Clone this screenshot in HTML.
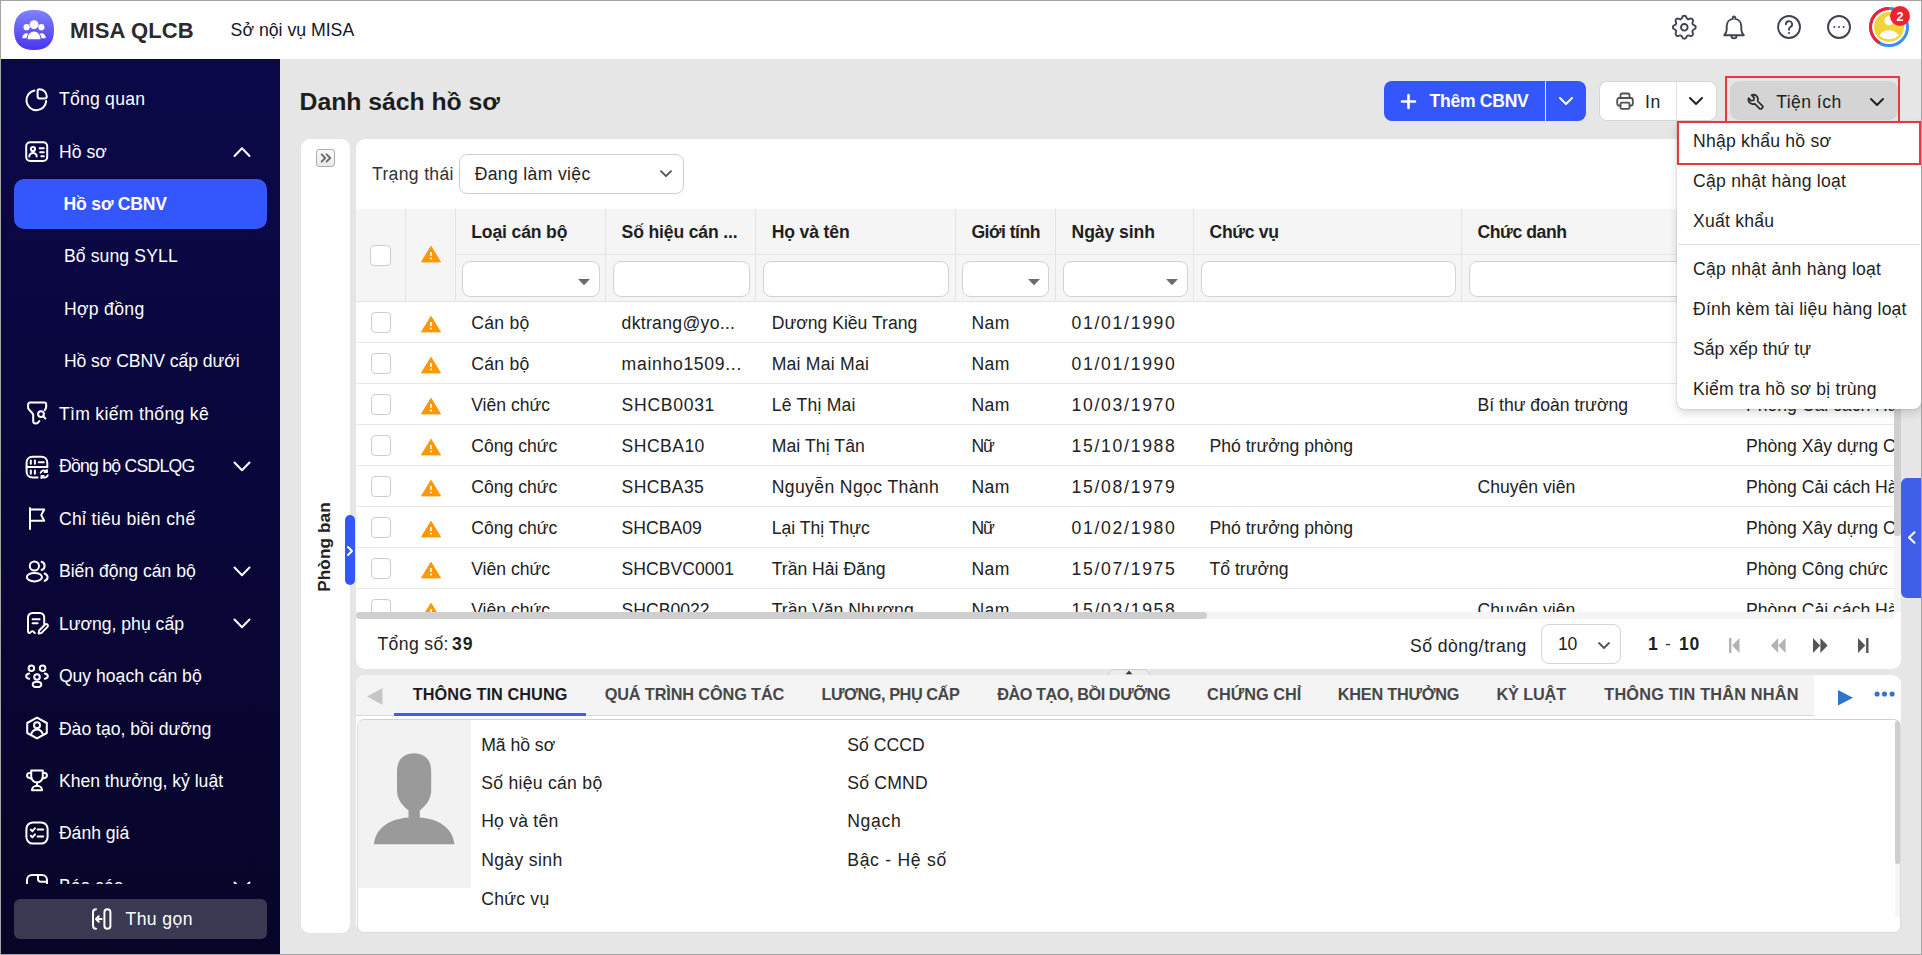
<!DOCTYPE html>
<html><head><meta charset="utf-8">
<style>
*{box-sizing:border-box;margin:0;padding:0}
html,body{width:1922px;height:955px;overflow:hidden}
body{position:relative;background:#e6e6e6;font-family:"Liberation Sans",sans-serif;color:#222}
.a{position:absolute}
.t{position:absolute;line-height:1;white-space:nowrap}
svg{position:absolute;overflow:visible}
.w{stroke:#fff;fill:none;stroke-width:2;stroke-linecap:round;stroke-linejoin:round}
.k{fill:none;stroke-linecap:round;stroke-linejoin:round}
.cb{position:absolute;background:#fff;border:1.2px solid #cdcdcd;border-radius:4px}
.fi{position:absolute;top:260.5px;height:36px;background:#fff;border:1.2px solid #d3d3d3;border-radius:8px}
.vl{position:absolute;width:1px;background:#e3e3e3}
.hl{position:absolute;height:1px;background:#e8e8e8}

</style></head><body>
<div class="a" style="left:1px;top:1px;width:1920px;height:58px;background:#fff"></div>
<svg style="left:14px;top:10px;" width="40" height="40" viewBox="0 0 40 40"><defs><linearGradient id="lg" x1="0" y1="0" x2="0" y2="1"><stop offset="0" stop-color="#7d84fd"/><stop offset="1" stop-color="#4a33f1"/></linearGradient></defs><path d="M20 0C33.5 0 40 6.5 40 20S33.5 40 20 40 0 33.5 0 20 6.5 0 20 0z" fill="url(#lg)"/></svg>
<svg style="left:14px;top:10px;" width="40" height="40" viewBox="0 0 40 40"><g fill="#fff">
<circle cx="20" cy="14.6" r="4.4"/><circle cx="12.6" cy="17.2" r="3.1"/><circle cx="27.4" cy="17.2" r="3.1"/>
<path d="M13.6 29.3c0-4.6 2.8-7.7 6.4-7.7s6.4 3.1 6.4 7.7z"/>
<path d="M8.2 28.3c0-3 1.8-5 4.5-5 .8 0 1.4.2 1.9.5-1.3 1.3-1.9 2.8-2 4.5z"/>
<path d="M31.8 28.3c0-3-1.8-5-4.5-5-.8 0-1.4.2-1.9.5 1.3 1.3 1.9 2.8 2 4.5z"/></g></svg>
<div class="t" style="left:70.0px;top:19.58px;font-size:22px;font-weight:700;color:#2b2b2b;letter-spacing:0.122px;">MISA QLCB</div>
<div class="t" style="left:230.6px;top:21.72px;font-size:17.7px;color:#15152d;letter-spacing:-0.006px;">Sở nội vụ MISA</div>
<svg style="left:1668.7px;top:11.5px" width="30.6" height="30.6" viewBox="0 0 24 24"><g class="k" stroke="#3d4350" stroke-width="1.5">
<path d="M10.325 4.317c.426-1.756 2.924-1.756 3.35 0a1.724 1.724 0 0 0 2.573 1.066c1.543-.94 3.31.826 2.37 2.37a1.724 1.724 0 0 0 1.065 2.572c1.756.426 1.756 2.924 0 3.35a1.724 1.724 0 0 0-1.066 2.573c.94 1.543-.826 3.31-2.37 2.37a1.724 1.724 0 0 0-2.572 1.065c-.426 1.756-2.924 1.756-3.35 0a1.724 1.724 0 0 0-2.573-1.066c-1.543.94-3.31-.826-2.37-2.37a1.724 1.724 0 0 0-1.065-2.572c-1.756-.426-1.756-2.924 0-3.35a1.724 1.724 0 0 0 1.066-2.573c-.94-1.543.826-3.31 2.37-2.37c1 .608 2.296.07 2.572-1.065z"/>
<circle cx="12" cy="12" r="2.6"/></g></svg>
<svg style="left:1723px;top:16px;" width="22" height="24" viewBox="0 0 22 24"><g class="k" stroke="#3d4350" stroke-width="1.9">
<path d="M1.2 19.2h19.6c-1.6-1.3-2.5-2.9-2.5-5.6V10.3c0-3.8-2.6-6.9-6-7.4V1.8a1.3 1.3 0 0 0-2.6 0v1.1c-3.4.5-6 3.6-6 7.4v3.3c0 2.7-.9 4.3-2.5 5.6z"/>
<path d="M8.4 19.8a2.6 2.6 0 0 0 5.2 0"/></g></svg>
<svg style="left:1777px;top:15px;" width="24" height="24" viewBox="0 0 24 24"><g class="k" stroke="#3d4350" stroke-width="1.9">
<circle cx="12" cy="12" r="11"/>
<path d="M8.9 9.3a3.1 3.1 0 1 1 4.6 2.7c-1 .55-1.5 1.2-1.5 2.3v.5"/></g>
<circle cx="12" cy="18" r="1.1" fill="#3d4350"/></svg>
<svg style="left:1827px;top:15px;" width="24" height="24" viewBox="0 0 24 24"><circle cx="12" cy="12" r="11" fill="none" stroke="#3d4350" stroke-width="1.9"/>
<g fill="#3d4350"><circle cx="7.4" cy="12" r="1"/><circle cx="12" cy="12" r="1"/><circle cx="16.6" cy="12" r="1"/></g></svg>
<svg style="left:1869px;top:7px;" width="40" height="40" viewBox="0 0 40 40"><circle cx="20" cy="20" r="18.5" fill="none" stroke="#3d8ef6" stroke-width="3"/>
<path d="M10.6 35.9A18.5 18.5 0 0 1 20 1.5" fill="none" stroke="#ee2530" stroke-width="3"/>
<circle cx="20" cy="20" r="15" fill="#f3d33c"/>
<circle cx="20" cy="13.8" r="4.6" fill="#fff"/>
<path d="M10.4 28.6c1.6-3.3 5.2-5.4 9.6-5.4s8 2.1 9.6 5.4c-2.2 2.5-5.6 3.6-9.6 3.6s-7.4-1.1-9.6-3.6z" fill="#fff"/></svg>
<div class="a" style="left:1890px;top:5.7px;width:20px;height:20px;border-radius:50%;background:#ec2330"></div>
<div class="t" style="left:1890.0px;top:10.73px;font-size:12.6px;font-weight:700;color:#fff;width:20px;text-align:center;">2</div>
<div class="a" style="left:1px;top:59px;width:279px;height:895px;background:linear-gradient(#0b0848 0%,#09063a 50%,#070527 100%)"></div>
<div class="a" style="left:14px;top:179px;width:253px;height:50px;border-radius:10px;background:#3456fd"></div>
<div class="t" style="left:58.9px;top:91.10px;font-size:17.6px;color:#fff;letter-spacing:0.245px;">Tổng quan</div>
<svg style="left:24.5px;top:86.6px;" width="24" height="24" viewBox="0 0 24 24"><g class="w"><path d="M9.4 3.6A9.9 9.9 0 1 0 21.2 13.9"/><path d="M12.6 4a1.8 1.8 0 0 1 1.8-1.8 7.4 7.4 0 0 1 7.4 7.4 1.8 1.8 0 0 1-1.8 1.8h-5.6a1.8 1.8 0 0 1-1.8-1.8z"/></g></svg>
<div class="t" style="left:58.9px;top:143.55px;font-size:17.6px;color:#fff;letter-spacing:0.045px;">Hồ sơ</div>
<svg style="left:24.5px;top:139.05px;" width="24" height="24" viewBox="0 0 24 24"><g class="w"><rect x="1.2" y="3.2" width="21" height="18.8" rx="4"/><circle cx="8" cy="10" r="2.1"/><path d="M4.3 17.6a3.7 3.7 0 0 1 7.4 0"/><path d="M14.6 9.3h4.2M15.2 13.3h3.6M16.3 17.3h2.5"/></g></svg>
<svg style="left:233px;top:145.65px;" width="18" height="12" viewBox="0 0 18 12"><path class="w" stroke-width="2.2" d="M1.5 10L9 2.3l7.5 7.7"/></svg>
<div class="t" style="left:63.6px;top:195.70px;font-size:17.6px;font-weight:700;color:#fff;letter-spacing:-0.208px;">Hồ sơ CBNV</div>
<div class="t" style="left:63.9px;top:248.45px;font-size:17.6px;color:#fff;letter-spacing:0.118px;">Bổ sung SYLL</div>
<div class="t" style="left:63.9px;top:300.90px;font-size:17.6px;color:#fff;letter-spacing:0.320px;">Hợp đồng</div>
<div class="t" style="left:63.9px;top:353.35px;font-size:17.6px;color:#fff;letter-spacing:-0.052px;">Hồ sơ CBNV cấp dưới</div>
<div class="t" style="left:58.9px;top:405.80px;font-size:17.6px;color:#fff;letter-spacing:0.318px;">Tìm kiếm thống kê</div>
<svg style="left:24.5px;top:401.3px;" width="24" height="24" viewBox="0 0 24 24"><g class="w"><path d="M19.8 9.2c1-1.2 1.4-2.2 1.4-3.6V3.5a2 2 0 0 0-2-2H5.1a2 2 0 0 0-2 2v2.9c0 .8.3 1.5.9 2.1l3.4 3.7c.5.5.8 1.2.8 1.9v6.1c0 1.2 1.2 2.2 2.7 2.2 1.3 0 2.6-.8 3.5-2.4"/><circle cx="16" cy="13.1" r="2.9"/><path d="M18.2 15.3l2.2 2.2"/></g></svg>
<div class="t" style="left:58.9px;top:458.25px;font-size:17.6px;color:#fff;letter-spacing:-0.717px;">Đồng bộ CSDLQG</div>
<svg style="left:24.5px;top:453.75px;" width="24" height="24" viewBox="0 0 24 24"><g class="w"><path d="M12.6 23.4H7.5c-3.5 0-5.9-2.4-5.9-5.9V8.7c0-3.5 2.4-5.9 5.9-5.9h8.9c3.5 0 5.9 2.4 5.9 5.9V13"/><path d="M1.6 13h20.7"/><path d="M5.8 6.6v3.1M9.9 6.6v3.1M13.8 8.2h5M5.8 16.6v3.1M9.9 16.6v3.1"/><g stroke-width="1.8"><path d="M15.6 18.8c.6-1.6 1.9-2.4 3.4-2.4 1.1 0 2 .5 2.6 1.2M22 15.8v2.4h-2.4"/><path d="M22.8 21.2c-.6 1.6-1.9 2.4-3.4 2.4-1.1 0-2-.5-2.6-1.2M16.4 24.2v-2.4h2.4"/></g></g></svg>
<svg style="left:233px;top:461.05px;" width="18" height="11" viewBox="0 0 18 11"><path class="w" stroke-width="2.2" d="M1.5 1.5L9 9.2l7.5-7.7"/></svg>
<div class="t" style="left:58.9px;top:510.70px;font-size:17.6px;color:#fff;letter-spacing:0.327px;">Chỉ tiêu biên chế</div>
<svg style="left:24.5px;top:506.20000000000005px;" width="24" height="24" viewBox="0 0 24 24"><g class="w"><path d="M5 23V2"/><path d="M5 3.5h14.2l-3 5.6 3 5.6H5"/></g></svg>
<div class="t" style="left:58.9px;top:563.15px;font-size:17.6px;color:#fff;">Biến động cán bộ</div>
<svg style="left:24.5px;top:558.65px;" width="24" height="24" viewBox="0 0 24 24"><g class="w"><circle cx="9.4" cy="7" r="4.6"/><ellipse cx="9.4" cy="18.2" rx="7.6" ry="4.2"/><path d="M16.6 2.8a4.3 4.3 0 0 1 0 8.2M19.6 14.5c2 .9 3 2.2 3 3.7s-1 2.8-3 3.7"/></g></svg>
<svg style="left:233px;top:565.95px;" width="18" height="11" viewBox="0 0 18 11"><path class="w" stroke-width="2.2" d="M1.5 1.5L9 9.2l7.5-7.7"/></svg>
<div class="t" style="left:58.9px;top:615.60px;font-size:17.6px;color:#fff;">Lương, phụ cấp</div>
<svg style="left:24.5px;top:611.1px;" width="24" height="24" viewBox="0 0 24 24"><g class="w"><path d="M19.2 13V6.5c0-2.5-1.9-4.5-4.4-4.5H7.4C4.9 2 3 4 3 6.5V20.6c0 1.2 1.3 1.8 2.2 1l1-1c.6-.6 1.6-.6 2.2 0l1.4 1.4"/><path d="M7.6 8.2h7M7.6 12.2h5"/><path d="M13.6 22.4l.5-2.9 6-6a1.7 1.7 0 0 1 2.4 2.4l-6 6z"/></g></svg>
<svg style="left:233px;top:618.4000000000001px;" width="18" height="11" viewBox="0 0 18 11"><path class="w" stroke-width="2.2" d="M1.5 1.5L9 9.2l7.5-7.7"/></svg>
<div class="t" style="left:58.9px;top:668.05px;font-size:17.6px;color:#fff;">Quy hoạch cán bộ</div>
<svg style="left:24.5px;top:663.5500000000001px;" width="24" height="24" viewBox="0 0 24 24"><g class="w"><circle cx="6.4" cy="4.2" r="2.8"/><circle cx="17.6" cy="4.2" r="2.8"/><circle cx="12" cy="13" r="2.8"/><ellipse cx="12" cy="20.4" rx="4.3" ry="2.6"/><path d="M4.2 9.6C2.4 10 1.2 11 1.2 12.2s1.2 2.2 3 2.6M19.8 9.6c1.8.4 3 1.4 3 2.6s-1.2 2.2-3 2.6"/></g></svg>
<div class="t" style="left:58.9px;top:720.50px;font-size:17.6px;color:#fff;">Đào tạo, bồi dưỡng</div>
<svg style="left:24.5px;top:716.0000000000001px;" width="24" height="24" viewBox="0 0 24 24"><g class="w"><path d="M12 1.6l9.8 5.4v10L12 22.4 2.2 17V7z"/><circle cx="12" cy="9.2" r="3"/><path d="M6.4 17.6c.9-2.6 3-4.2 5.6-4.2s4.7 1.6 5.6 4.2"/></g></svg>
<div class="t" style="left:58.9px;top:772.95px;font-size:17.6px;color:#fff;">Khen thưởng, kỷ luật</div>
<svg style="left:24.5px;top:768.45px;" width="24" height="24" viewBox="0 0 24 24"><g class="w"><path d="M6.2 2.4h11.6v6.2a5.8 5.8 0 0 1-11.6 0z"/><path d="M6.2 5H4.4a2.4 2.4 0 0 0-.6 4.7l2.6.9M17.8 5h1.8a2.4 2.4 0 0 1 .6 4.7l-2.6.9"/><path d="M12 14.4v3.4"/><path d="M7 22.2c0-2.4 2.2-4.4 5-4.4s5 2 5 4.4z"/></g></svg>
<div class="t" style="left:58.9px;top:825.40px;font-size:17.6px;color:#fff;">Đánh giá</div>
<svg style="left:24.5px;top:820.9000000000001px;" width="24" height="24" viewBox="0 0 24 24"><g class="w"><rect x="1.4" y="1.4" width="21.2" height="21.2" rx="6.5"/><path d="M5.8 8.6l1.6 1.6 2.6-3M12.6 8.6h5.6M5.8 14.8l1.6 1.6 2.6-3M12.6 15.4h5.6"/></g></svg>
<div class="t" style="left:58.9px;top:877.85px;font-size:17.6px;color:#fff;">Báo cáo</div>
<svg style="left:24.5px;top:873.35px;" width="24" height="24" viewBox="0 0 24 24"><g class="w"><path d="M2 22V7c0-2.8 2.2-5 5-5h10c2.8 0 5 2.2 5 5v15"/><path d="M13 2v4c0 1.6 1.3 2.8 2.8 2.8H22"/></g></svg>
<svg style="left:233px;top:880.6500000000001px;" width="18" height="11" viewBox="0 0 18 11"><path class="w" stroke-width="2.2" d="M1.5 1.5L9 9.2l7.5-7.7"/></svg>
<div class="a" style="left:1px;top:884px;width:279px;height:70px;background:linear-gradient(#07052a,#070527)"></div>
<div class="a" style="left:14px;top:899px;width:253px;height:40px;border-radius:6px;background:#3b3852"></div>
<svg style="left:91px;top:906.5px;" width="22" height="24" viewBox="0 0 22 24"><g class="w" stroke-width="2"><path d="M5 2.2c-2 0-3 1.4-3 3.2v13.2c0 1.8 1 3.2 3 3.2"/><path d="M16.4 2.2c1.8 0 3 1 3 3v13.6c0 2-1.2 3-3 3s-3-1-3-3V5.2c0-2 1.2-3 3-3z"/><path d="M10.6 12H5.4M7.8 9.2L5 12l2.8 2.8"/></g></svg>
<div class="t" style="left:125.5px;top:911.40px;font-size:17.6px;color:#fff;letter-spacing:0.406px;">Thu gọn</div>
<div class="t" style="left:299.6px;top:90.01px;font-size:24.8px;font-weight:700;color:#1d1d1d;letter-spacing:-0.050px;">Danh sách hồ sơ</div>
<div class="a" style="left:1384px;top:81px;width:202px;height:40px;border-radius:8px;background:#3456fd"></div>
<div class="a" style="left:1545px;top:81px;width:1.2px;height:40px;background:#e8ecff"></div>
<svg style="left:1401px;top:93.5px;" width="15" height="15" viewBox="0 0 15 15"><path d="M7.5 1v13M1 7.5h13" stroke="#fff" stroke-width="2.6" stroke-linecap="round"/></svg>
<div class="t" style="left:1429.6px;top:92.80px;font-size:17.6px;font-weight:700;color:#fff;letter-spacing:-0.309px;">Thêm CBNV</div>
<svg style="left:1559px;top:97px;" width="14" height="8" viewBox="0 0 14 8"><path class="w" stroke-width="2" d="M1 1l6 6 6-6"/></svg>
<div class="a" style="left:1599px;top:81px;width:117.5px;height:39.5px;border-radius:8px;background:#fff;border:1px solid #d6d6d6"></div>
<div class="a" style="left:1675.5px;top:82px;width:1px;height:38px;background:#e2e2e2"></div>
<svg style="left:1616px;top:92px;" width="18" height="18" viewBox="0 0 18 18"><g class="k" stroke="#505050" stroke-width="1.8"><path d="M4.5 6V3.2c0-1 .8-1.7 1.7-1.7h5.6c1 0 1.7.8 1.7 1.7V6"/><path d="M4.5 13.6H3.2c-1.1 0-2-.9-2-2V8c0-1.1.9-2 2-2h11.6c1.1 0 2 .9 2 2v3.6c0 1.1-.9 2-2 2h-1.3"/><rect x="4.5" y="10.6" width="9" height="6.2" rx="1.4"/></g></svg>
<div class="t" style="left:1645.0px;top:93.50px;font-size:17.6px;color:#222;letter-spacing:0.713px;">In</div>
<svg style="left:1688.5px;top:97px;" width="14" height="8" viewBox="0 0 14 8"><path class="k" stroke="#222" stroke-width="2" d="M1 1l6 6 6-6"/></svg>
<div class="a" style="left:1730px;top:81px;width:168px;height:39px;border-radius:9px;background:#d4d4d4"></div>
<svg style="left:1747px;top:92.5px;" width="17" height="17" viewBox="0 0 17 17"><path transform="translate(17 0) scale(-1 1)" class="k" stroke="#2a2a2a" stroke-width="1.7" d="M10.6 1.6a4.6 4.6 0 0 0-4.2 6.4L1.6 12.8a1.4 1.4 0 0 0 0 2l.8.8a1.4 1.4 0 0 0 2 0L9.2 10.8a4.6 4.6 0 0 0 6.2-5.6l-2.6 2.6-2.4-.6-.6-2.4 2.6-2.6c-.5-.3-1.1-.5-1.8-.5z"/></svg>
<div class="t" style="left:1776.2px;top:94.10px;font-size:17.6px;color:#222;letter-spacing:0.438px;">Tiện ích</div>
<svg style="left:1869.5px;top:98px;" width="14" height="8" viewBox="0 0 14 8"><path class="k" stroke="#222" stroke-width="2" d="M1 1l6 6 6-6"/></svg>
<div class="a" style="left:1725px;top:76px;width:175px;height:46.5px;border:2px solid #e8383e"></div>
<div class="a" style="left:301px;top:139px;width:49px;height:794px;border-radius:9px;background:#fff"></div>
<div class="a" style="left:316px;top:149px;width:19px;height:18px;border-radius:3px;background:linear-gradient(#fbfbfb,#e9e9e9);border:1px solid #acacac"></div>
<svg style="left:319.5px;top:153px;" width="12" height="10" viewBox="0 0 12 10"><path class="k" stroke="#6a6a6a" stroke-width="1.9" d="M1.6 1.4L5.2 5 1.6 8.6M6.6 1.4L10.2 5 6.6 8.6"/></svg>
<div class="t" style="left:324.6px;top:546.7px;font-size:17.2px;font-weight:700;color:#222;transform:translate(-50%,-50%) rotate(-90deg);letter-spacing:0.1px">Phòng ban</div>
<div class="a" style="left:345px;top:515px;width:10px;height:70px;border-radius:5px;background:#3456fd"></div>
<svg style="left:347px;top:546px;" width="6" height="10" viewBox="0 0 6 10"><path class="w" stroke-width="1.6" d="M1 1l4 4-4 4"/></svg>
<div class="a" style="left:356px;top:139px;width:1544.5px;height:530px;border-radius:9px;background:#fff"></div>
<div class="t" style="left:372.0px;top:166.20px;font-size:17.6px;color:#333;letter-spacing:0.326px;">Trạng thái</div>
<div class="a" style="left:459px;top:154.4px;width:224.6px;height:39.2px;border-radius:8px;background:#fff;border:1.2px solid #cfcfcf"></div>
<div class="t" style="left:474.7px;top:165.80px;font-size:17.6px;color:#1f1f1f;letter-spacing:0.335px;">Đang làm việc</div>
<svg style="left:659.5px;top:170px;" width="12" height="8" viewBox="0 0 12 8"><path class="k" stroke="#555" stroke-width="1.9" d="M1 1.2l5 5 5-5"/></svg>
<div class="a" style="left:356px;top:209.2px;width:1538.5px;height:92px;background:#f5f5f5"></div>
<div class="vl" style="left:404.9px;top:209.2px;height:92px"></div>
<div class="vl" style="left:454.7px;top:209.2px;height:92px"></div>
<div class="vl" style="left:605.1px;top:209.2px;height:92px"></div>
<div class="vl" style="left:755.2px;top:209.2px;height:92px"></div>
<div class="vl" style="left:954.9px;top:209.2px;height:92px"></div>
<div class="vl" style="left:1055.0px;top:209.2px;height:92px"></div>
<div class="vl" style="left:1193.0px;top:209.2px;height:92px"></div>
<div class="vl" style="left:1461.0px;top:209.2px;height:92px"></div>
<div class="vl" style="left:1729.5px;top:209.2px;height:92px"></div>
<div class="hl" style="left:455px;top:254px;width:1439px;background:#e6e6e6"></div>
<div class="hl" style="left:356px;top:301px;width:1538px;background:#e4e4e4"></div>
<div class="cb" style="left:370px;top:244.8px;width:21px;height:21px"></div>
<svg style="left:421px;top:244.6px;" width="20" height="18" viewBox="0 0 20 18"><path d="M10 1.3L19.5 16.9H.5z" fill="#fb9804" stroke="#fb9804" stroke-width="1" stroke-linejoin="round"/><path d="M10 7v3.9" stroke="#fff" stroke-width="1.7"/><circle cx="10" cy="13.5" r="1" fill="#fff"/></svg>
<div class="t" style="left:471.2px;top:223.90px;font-size:17.6px;font-weight:700;color:#1f1f1f;letter-spacing:-0.147px;">Loại cán bộ</div>
<div class="t" style="left:621.6px;top:223.90px;font-size:17.6px;font-weight:700;color:#1f1f1f;letter-spacing:-0.164px;">Số hiệu cán ...</div>
<div class="t" style="left:771.7px;top:223.90px;font-size:17.6px;font-weight:700;color:#1f1f1f;letter-spacing:-0.150px;">Họ và tên</div>
<div class="t" style="left:971.4px;top:223.90px;font-size:17.6px;font-weight:700;color:#1f1f1f;letter-spacing:-0.514px;">Giới tính</div>
<div class="t" style="left:1071.5px;top:223.90px;font-size:17.6px;font-weight:700;color:#1f1f1f;letter-spacing:-0.072px;">Ngày sinh</div>
<div class="t" style="left:1209.5px;top:223.90px;font-size:17.6px;font-weight:700;color:#1f1f1f;letter-spacing:-0.318px;">Chức vụ</div>
<div class="t" style="left:1477.5px;top:223.90px;font-size:17.6px;font-weight:700;color:#1f1f1f;letter-spacing:-0.426px;">Chức danh</div>
<div class="t" style="left:1746.0px;top:223.90px;font-size:17.6px;font-weight:700;color:#1f1f1f;">Phòng ban</div>
<div class="fi" style="left:462.2px;width:137.40000000000003px"></div>
<div class="fi" style="left:612.6px;width:137.10000000000002px"></div>
<div class="fi" style="left:762.7px;width:186.69999999999993px"></div>
<div class="fi" style="left:962.4px;width:87.10000000000002px"></div>
<div class="fi" style="left:1062.5px;width:125.0px"></div>
<div class="fi" style="left:1200.5px;width:255.0px"></div>
<div class="fi" style="left:1468.5px;width:255.5px"></div>
<div class="fi" style="left:1737px;width:151px"></div>
<svg style="left:578.1px;top:279px;" width="12" height="6.2" viewBox="0 0 12 6.2"><path d="M0 0h12L6 6.2z" fill="#6b6b6b"/></svg>
<svg style="left:1028.0px;top:279px;" width="12" height="6.2" viewBox="0 0 12 6.2"><path d="M0 0h12L6 6.2z" fill="#6b6b6b"/></svg>
<svg style="left:1166.0px;top:279px;" width="12" height="6.2" viewBox="0 0 12 6.2"><path d="M0 0h12L6 6.2z" fill="#6b6b6b"/></svg>
<div class="a" style="left:356px;top:302px;width:1538px;height:310px;overflow:hidden">
<div class="hl" style="left:0;top:40px;width:1538px"></div>
<div class="cb" style="left:15px;top:10px;width:19.5px;height:20.5px"></div>
<svg style="left:65px;top:12.6px;" width="20" height="18" viewBox="0 0 20 18"><path d="M10 1.3L19.5 16.9H.5z" fill="#fb9804" stroke="#fb9804" stroke-width="1" stroke-linejoin="round"/><path d="M10 7v3.9" stroke="#fff" stroke-width="1.7"/><circle cx="10" cy="13.5" r="1" fill="#fff"/></svg>
<div class="hl" style="left:0;top:81px;width:1538px"></div>
<div class="cb" style="left:15px;top:51px;width:19.5px;height:20.5px"></div>
<svg style="left:65px;top:53.6px;" width="20" height="18" viewBox="0 0 20 18"><path d="M10 1.3L19.5 16.9H.5z" fill="#fb9804" stroke="#fb9804" stroke-width="1" stroke-linejoin="round"/><path d="M10 7v3.9" stroke="#fff" stroke-width="1.7"/><circle cx="10" cy="13.5" r="1" fill="#fff"/></svg>
<div class="hl" style="left:0;top:122px;width:1538px"></div>
<div class="cb" style="left:15px;top:92px;width:19.5px;height:20.5px"></div>
<svg style="left:65px;top:94.6px;" width="20" height="18" viewBox="0 0 20 18"><path d="M10 1.3L19.5 16.9H.5z" fill="#fb9804" stroke="#fb9804" stroke-width="1" stroke-linejoin="round"/><path d="M10 7v3.9" stroke="#fff" stroke-width="1.7"/><circle cx="10" cy="13.5" r="1" fill="#fff"/></svg>
<div class="hl" style="left:0;top:163px;width:1538px"></div>
<div class="cb" style="left:15px;top:133px;width:19.5px;height:20.5px"></div>
<svg style="left:65px;top:135.6px;" width="20" height="18" viewBox="0 0 20 18"><path d="M10 1.3L19.5 16.9H.5z" fill="#fb9804" stroke="#fb9804" stroke-width="1" stroke-linejoin="round"/><path d="M10 7v3.9" stroke="#fff" stroke-width="1.7"/><circle cx="10" cy="13.5" r="1" fill="#fff"/></svg>
<div class="hl" style="left:0;top:204px;width:1538px"></div>
<div class="cb" style="left:15px;top:174px;width:19.5px;height:20.5px"></div>
<svg style="left:65px;top:176.6px;" width="20" height="18" viewBox="0 0 20 18"><path d="M10 1.3L19.5 16.9H.5z" fill="#fb9804" stroke="#fb9804" stroke-width="1" stroke-linejoin="round"/><path d="M10 7v3.9" stroke="#fff" stroke-width="1.7"/><circle cx="10" cy="13.5" r="1" fill="#fff"/></svg>
<div class="hl" style="left:0;top:245px;width:1538px"></div>
<div class="cb" style="left:15px;top:215px;width:19.5px;height:20.5px"></div>
<svg style="left:65px;top:217.6px;" width="20" height="18" viewBox="0 0 20 18"><path d="M10 1.3L19.5 16.9H.5z" fill="#fb9804" stroke="#fb9804" stroke-width="1" stroke-linejoin="round"/><path d="M10 7v3.9" stroke="#fff" stroke-width="1.7"/><circle cx="10" cy="13.5" r="1" fill="#fff"/></svg>
<div class="hl" style="left:0;top:286px;width:1538px"></div>
<div class="cb" style="left:15px;top:256px;width:19.5px;height:20.5px"></div>
<svg style="left:65px;top:258.6px;" width="20" height="18" viewBox="0 0 20 18"><path d="M10 1.3L19.5 16.9H.5z" fill="#fb9804" stroke="#fb9804" stroke-width="1" stroke-linejoin="round"/><path d="M10 7v3.9" stroke="#fff" stroke-width="1.7"/><circle cx="10" cy="13.5" r="1" fill="#fff"/></svg>
<div class="hl" style="left:0;top:327px;width:1538px"></div>
<div class="cb" style="left:15px;top:297px;width:19.5px;height:20.5px"></div>
<svg style="left:65px;top:299.6px;" width="20" height="18" viewBox="0 0 20 18"><path d="M10 1.3L19.5 16.9H.5z" fill="#fb9804" stroke="#fb9804" stroke-width="1" stroke-linejoin="round"/><path d="M10 7v3.9" stroke="#fff" stroke-width="1.7"/><circle cx="10" cy="13.5" r="1" fill="#fff"/></svg>
</div>
<div class="t" style="left:471.2px;top:315.10px;font-size:17.6px;color:#222;letter-spacing:0.293px;">Cán bộ</div>
<div class="t" style="left:621.6px;top:315.10px;font-size:17.6px;color:#222;letter-spacing:0.300px;">dktrang@yo...</div>
<div class="t" style="left:771.7px;top:315.10px;font-size:17.6px;color:#222;">Dương Kiều Trang</div>
<div class="t" style="left:971.4px;top:315.10px;font-size:17.6px;color:#222;letter-spacing:0.372px;">Nam</div>
<div class="t" style="left:1071.5px;top:315.10px;font-size:17.6px;color:#222;letter-spacing:1.704px;">01/01/1990</div>
<div class="t" style="left:1746.0px;top:315.10px;font-size:17.6px;color:#222;width:148px;clip-path:inset(-10px 0 -10px -10px);">Phòng Tổ chức cán bộ</div>
<div class="t" style="left:471.2px;top:356.10px;font-size:17.6px;color:#222;letter-spacing:0.293px;">Cán bộ</div>
<div class="t" style="left:621.6px;top:356.10px;font-size:17.6px;color:#222;letter-spacing:0.682px;">mainho1509...</div>
<div class="t" style="left:771.7px;top:356.10px;font-size:17.6px;color:#222;letter-spacing:0.237px;">Mai Mai Mai</div>
<div class="t" style="left:971.4px;top:356.10px;font-size:17.6px;color:#222;letter-spacing:0.372px;">Nam</div>
<div class="t" style="left:1071.5px;top:356.10px;font-size:17.6px;color:#222;letter-spacing:1.704px;">01/01/1990</div>
<div class="t" style="left:1746.0px;top:356.10px;font-size:17.6px;color:#222;width:148px;clip-path:inset(-10px 0 -10px -10px);">Phòng Tổ chức cán bộ</div>
<div class="t" style="left:471.2px;top:397.10px;font-size:17.6px;color:#222;">Viên chức</div>
<div class="t" style="left:621.6px;top:397.10px;font-size:17.6px;color:#222;letter-spacing:0.681px;">SHCB0031</div>
<div class="t" style="left:771.7px;top:397.10px;font-size:17.6px;color:#222;letter-spacing:0.219px;">Lê Thị Mai</div>
<div class="t" style="left:971.4px;top:397.10px;font-size:17.6px;color:#222;letter-spacing:0.372px;">Nam</div>
<div class="t" style="left:1071.5px;top:397.10px;font-size:17.6px;color:#222;letter-spacing:1.704px;">10/03/1970</div>
<div class="t" style="left:1477.5px;top:397.10px;font-size:17.6px;color:#222;">Bí thư đoàn trường</div>
<div class="t" style="left:1746.0px;top:397.10px;font-size:17.6px;color:#222;width:148px;clip-path:inset(-10px 0 -10px -10px);">Phòng Cải cách Hành</div>
<div class="t" style="left:471.2px;top:438.10px;font-size:17.6px;color:#222;">Công chức</div>
<div class="t" style="left:621.6px;top:438.10px;font-size:17.6px;color:#222;letter-spacing:0.435px;">SHCBA10</div>
<div class="t" style="left:771.7px;top:438.10px;font-size:17.6px;color:#222;letter-spacing:0.085px;">Mai Thị Tân</div>
<div class="t" style="left:971.4px;top:438.10px;font-size:17.6px;color:#222;letter-spacing:-0.984px;">Nữ</div>
<div class="t" style="left:1071.5px;top:438.10px;font-size:17.6px;color:#222;letter-spacing:1.704px;">15/10/1988</div>
<div class="t" style="left:1209.5px;top:438.10px;font-size:17.6px;color:#222;">Phó trưởng phòng</div>
<div class="t" style="left:1746.0px;top:438.10px;font-size:17.6px;color:#222;width:148px;clip-path:inset(-10px 0 -10px -10px);">Phòng Xây dựng Chính</div>
<div class="t" style="left:471.2px;top:479.10px;font-size:17.6px;color:#222;">Công chức</div>
<div class="t" style="left:621.6px;top:479.10px;font-size:17.6px;color:#222;letter-spacing:0.335px;">SHCBA35</div>
<div class="t" style="left:771.7px;top:479.10px;font-size:17.6px;color:#222;letter-spacing:0.377px;">Nguyễn Ngọc Thành</div>
<div class="t" style="left:971.4px;top:479.10px;font-size:17.6px;color:#222;letter-spacing:0.372px;">Nam</div>
<div class="t" style="left:1071.5px;top:479.10px;font-size:17.6px;color:#222;letter-spacing:1.704px;">15/08/1979</div>
<div class="t" style="left:1477.5px;top:479.10px;font-size:17.6px;color:#222;">Chuyên viên</div>
<div class="t" style="left:1746.0px;top:479.10px;font-size:17.6px;color:#222;width:148px;clip-path:inset(-10px 0 -10px -10px);">Phòng Cải cách Hành</div>
<div class="t" style="left:471.2px;top:520.10px;font-size:17.6px;color:#222;">Công chức</div>
<div class="t" style="left:621.6px;top:520.10px;font-size:17.6px;color:#222;">SHCBA09</div>
<div class="t" style="left:771.7px;top:520.10px;font-size:17.6px;color:#222;">Lại Thị Thực</div>
<div class="t" style="left:971.4px;top:520.10px;font-size:17.6px;color:#222;letter-spacing:-0.984px;">Nữ</div>
<div class="t" style="left:1071.5px;top:520.10px;font-size:17.6px;color:#222;letter-spacing:1.704px;">01/02/1980</div>
<div class="t" style="left:1209.5px;top:520.10px;font-size:17.6px;color:#222;">Phó trưởng phòng</div>
<div class="t" style="left:1746.0px;top:520.10px;font-size:17.6px;color:#222;width:148px;clip-path:inset(-10px 0 -10px -10px);">Phòng Xây dựng Chính</div>
<div class="t" style="left:471.2px;top:561.10px;font-size:17.6px;color:#222;">Viên chức</div>
<div class="t" style="left:621.6px;top:561.10px;font-size:17.6px;color:#222;">SHCBVC0001</div>
<div class="t" style="left:771.7px;top:561.10px;font-size:17.6px;color:#222;">Trần Hải Đăng</div>
<div class="t" style="left:971.4px;top:561.10px;font-size:17.6px;color:#222;letter-spacing:0.372px;">Nam</div>
<div class="t" style="left:1071.5px;top:561.10px;font-size:17.6px;color:#222;letter-spacing:1.704px;">15/07/1975</div>
<div class="t" style="left:1209.5px;top:561.10px;font-size:17.6px;color:#222;">Tổ trưởng</div>
<div class="t" style="left:1746.0px;top:561.10px;font-size:17.6px;color:#222;width:148px;clip-path:inset(-10px 0 -10px -10px);">Phòng Công chức</div>
<div class="t" style="left:471.2px;top:602.10px;font-size:17.6px;color:#222;">Viên chức</div>
<div class="t" style="left:621.6px;top:602.10px;font-size:17.6px;color:#222;">SHCB0022</div>
<div class="t" style="left:771.7px;top:602.10px;font-size:17.6px;color:#222;">Trần Văn Nhượng</div>
<div class="t" style="left:971.4px;top:602.10px;font-size:17.6px;color:#222;letter-spacing:0.372px;">Nam</div>
<div class="t" style="left:1071.5px;top:602.10px;font-size:17.6px;color:#222;letter-spacing:1.704px;">15/03/1958</div>
<div class="t" style="left:1477.5px;top:602.10px;font-size:17.6px;color:#222;">Chuyên viên</div>
<div class="t" style="left:1746.0px;top:602.10px;font-size:17.6px;color:#222;width:148px;clip-path:inset(-10px 0 -10px -10px);">Phòng Cải cách Hành</div>
<div class="a" style="left:356px;top:612px;width:1538px;height:14px;background:#fff"></div>
<div class="a" style="left:356px;top:612px;width:1538px;height:7px;background:#f5f5f5"></div>
<div class="a" style="left:356px;top:612px;width:851px;height:7px;border-radius:4px;background:#cfcfcf"></div>
<div class="a" style="left:1894px;top:139px;width:6.5px;height:473px;background:#fff"></div>
<div class="a" style="left:1894.3px;top:209px;width:6.4px;height:403px;background:#f5f5f5"></div>
<div class="a" style="left:1894.3px;top:209px;width:6.4px;height:326.5px;border-radius:3px;background:#cfcfcf"></div>
<div class="t" style="left:377.5px;top:636.30px;font-size:17.6px;color:#222;letter-spacing:0.362px;">Tổng số:</div>
<div class="t" style="left:452.0px;top:636.30px;font-size:17.6px;font-weight:700;color:#1f1f1f;letter-spacing:0.9px;">39</div>
<div class="t" style="left:1410.0px;top:638.00px;font-size:17.6px;color:#222;letter-spacing:0.471px;">Số dòng/trang</div>
<div class="a" style="left:1541.4px;top:624.3px;width:80px;height:39.3px;border-radius:8px;background:#fff;border:1.2px solid #d3d3d3"></div>
<div class="t" style="left:1557.9px;top:636.20px;font-size:17.6px;color:#222;letter-spacing:-0.078px;">10</div>
<svg style="left:1597.5px;top:642px;" width="12" height="7" viewBox="0 0 12 7"><path class="k" stroke="#555" stroke-width="1.8" d="M1 1l5 5 5-5"/></svg>
<div class="t" style="left:1648.0px;top:636.20px;font-size:17.6px;font-weight:700;color:#1f1f1f;">1</div>
<div class="t" style="left:1665.0px;top:636.20px;font-size:17.6px;color:#444;">-</div>
<div class="t" style="left:1679.0px;top:636.20px;font-size:17.6px;font-weight:700;color:#1f1f1f;letter-spacing:0.6px;">10</div>
<svg style="left:1729px;top:637.5px;" width="11" height="15" viewBox="0 0 11 15"><path d="M0 0h2.4v15H0z M10.5 0v15L3.2 7.5z" fill="#b3b3b3"/></svg>
<svg style="left:1771px;top:637.5px;" width="15" height="15" viewBox="0 0 15 15"><path d="M7.2 0v15L0 7.5z M14.6 0v15L7.4 7.5z" fill="#b3b3b3"/></svg>
<svg style="left:1812.5px;top:637.5px;" width="15" height="15" viewBox="0 0 15 15"><path d="M0 0v15l7.2-7.5z M7.4 0v15l7.2-7.5z" fill="#555"/></svg>
<svg style="left:1857.5px;top:637.5px;" width="11" height="15" viewBox="0 0 11 15"><path d="M0 0v15l7.3-7.5z M8.1 0h2.4v15H8.1z" fill="#555"/></svg>
<div class="a" style="left:356px;top:675px;width:1544.5px;height:258px;border-radius:9px;background:#fff"></div>
<div class="a" style="left:356px;top:675px;width:1458px;height:41px;border-radius:9px 0 0 0;background:#f4f4f4"></div>
<div class="hl" style="left:356px;top:715px;width:1458px;background:#d9d9d9"></div>
<svg style="left:367px;top:688px;" width="15.5" height="17" viewBox="0 0 15.5 17"><path d="M15.5 0v17L0 8.5z" fill="#c6c6c6"/></svg>
<div class="t" style="left:412.8px;top:685.90px;font-size:16.3px;font-weight:700;color:#1c1c1c;letter-spacing:0.060px;">THÔNG TIN CHUNG</div>
<div class="t" style="left:604.7px;top:685.90px;font-size:16.3px;font-weight:700;color:#474747;letter-spacing:-0.129px;">QUÁ TRÌNH CÔNG TÁC</div>
<div class="t" style="left:821.4px;top:685.90px;font-size:16.3px;font-weight:700;color:#474747;letter-spacing:-0.438px;">LƯƠNG, PHỤ CẤP</div>
<div class="t" style="left:997.2px;top:685.90px;font-size:16.3px;font-weight:700;color:#474747;letter-spacing:-0.457px;">ĐÀO TẠO, BỒI DƯỠNG</div>
<div class="t" style="left:1207.1px;top:685.90px;font-size:16.3px;font-weight:700;color:#474747;letter-spacing:0.036px;">CHỨNG CHỈ</div>
<div class="t" style="left:1337.8px;top:685.90px;font-size:16.3px;font-weight:700;color:#474747;letter-spacing:-0.249px;">KHEN THƯỞNG</div>
<div class="t" style="left:1496.5px;top:685.90px;font-size:16.3px;font-weight:700;color:#474747;letter-spacing:-0.158px;">KỶ LUẬT</div>
<div class="t" style="left:1604.3px;top:685.90px;font-size:16.3px;font-weight:700;color:#474747;letter-spacing:0.181px;">THÔNG TIN THÂN NHÂN</div>
<div class="a" style="left:393.7px;top:712.8px;width:192.5px;height:3.2px;background:#3e5ef2"></div>
<svg style="left:1837.5px;top:689.5px;" width="15" height="15.4" viewBox="0 0 15 15.4"><path d="M0 0v15.4l15-7.7z" fill="#3275c6"/></svg>
<svg style="left:1873.5px;top:691.3px;" width="21" height="6" viewBox="0 0 21 6"><g fill="#3274c6"><circle cx="3.1" cy="3" r="2.55"/><circle cx="10.5" cy="3" r="2.55"/><circle cx="18.1" cy="3" r="2.55"/></g></svg>
<svg style="left:1107px;top:669px;" width="44" height="6" viewBox="0 0 44 6"><path d="M0.5 5.8L5.2 0.5H38.8L43.5 5.8" fill="#ececec" stroke="#cdcdcd" stroke-width="1"/><path d="M18.6 5.2L22 1.4l3.4 3.8z" fill="#3a3a3a"/></svg>
<div class="a" style="left:356.5px;top:718.5px;width:1544px;height:214.5px;border-radius:7px;background:#fff;border:1px solid #dcdcdc;border-top-color:#d2d2d2"></div>
<div class="a" style="left:357.5px;top:719.5px;width:113.5px;height:168.5px;background:#f2f2f2;border-radius:6px 0 0 0"></div>
<svg style="left:357px;top:719px;" width="114" height="170" viewBox="0 0 114 170"><path fill="#9a9a9a" d="M57.1 34.2C67 34.2 74.2 40 74.2 52.4L74.2 71.3C74.2 80 69 87 62.8 91.4L62.8 98.6C83 100 96 110 97.4 125.3L17 125.3C18.4 110 31.4 100 51.5 98.6L51.5 91.4C45.3 87 40 80 40 71.3L40 52.4C40 40 47.2 34.2 57.1 34.2Z"/></svg>
<div class="t" style="left:481.2px;top:736.80px;font-size:17.6px;color:#222;letter-spacing:-0.018px;">Mã hồ sơ</div>
<div class="t" style="left:481.2px;top:775.40px;font-size:17.6px;color:#222;letter-spacing:0.278px;">Số hiệu cán bộ</div>
<div class="t" style="left:481.2px;top:813.40px;font-size:17.6px;color:#222;letter-spacing:0.211px;">Họ và tên</div>
<div class="t" style="left:481.2px;top:852.40px;font-size:17.6px;color:#222;letter-spacing:0.344px;">Ngày sinh</div>
<div class="t" style="left:481.2px;top:890.90px;font-size:17.6px;color:#222;letter-spacing:0.242px;">Chức vụ</div>
<div class="t" style="left:847.2px;top:736.80px;font-size:17.6px;color:#222;letter-spacing:0.044px;">Số CCCD</div>
<div class="t" style="left:847.2px;top:775.40px;font-size:17.6px;color:#222;letter-spacing:0.219px;">Số CMND</div>
<div class="t" style="left:847.2px;top:813.40px;font-size:17.6px;color:#222;letter-spacing:0.660px;">Ngạch</div>
<div class="t" style="left:847.2px;top:852.40px;font-size:17.6px;color:#222;letter-spacing:0.708px;">Bậc - Hệ số</div>
<div class="a" style="left:1895px;top:720.5px;width:5px;height:196px;background:#f5f5f5"></div>
<div class="a" style="left:1895px;top:720.5px;width:5px;height:143.5px;border-radius:3px;background:#cfcfcf"></div>
<div class="a" style="left:1901px;top:478px;width:20px;height:119.5px;border-radius:6px 0 0 6px;background:#3f5fe8"></div>
<svg style="left:1906.5px;top:531.2px;" width="9" height="13" viewBox="0 0 9 13"><path class="w" stroke-width="2.2" d="M7.5 1.2L2 6.5l5.5 5.3"/></svg>
<div class="a" style="left:1677px;top:122px;width:243.5px;height:287px;border-radius:0 0 7px 7px;background:#fff;box-shadow:0 0 1.5px rgba(0,0,0,.35),0 4px 10px rgba(0,0,0,.14)"></div>
<div class="t" style="left:1693.0px;top:132.90px;font-size:17.6px;color:#1f1f1f;letter-spacing:0.230px;">Nhập khẩu hồ sơ</div>
<div class="t" style="left:1693.0px;top:173.10px;font-size:17.6px;color:#1f1f1f;letter-spacing:0.253px;">Cập nhật hàng loạt</div>
<div class="t" style="left:1693.0px;top:212.90px;font-size:17.6px;color:#1f1f1f;letter-spacing:0.221px;">Xuất khẩu</div>
<div class="t" style="left:1693.0px;top:261.00px;font-size:17.6px;color:#1f1f1f;letter-spacing:0.241px;">Cập nhật ảnh hàng loạt</div>
<div class="t" style="left:1693.0px;top:301.20px;font-size:17.6px;color:#1f1f1f;letter-spacing:0.199px;">Đính kèm tài liệu hàng loạt</div>
<div class="t" style="left:1693.0px;top:341.00px;font-size:17.6px;color:#1f1f1f;letter-spacing:0.042px;">Sắp xếp thứ tự</div>
<div class="t" style="left:1693.0px;top:380.80px;font-size:17.6px;color:#1f1f1f;letter-spacing:0.215px;">Kiểm tra hồ sơ bị trùng</div>
<div class="hl" style="left:1678px;top:244px;width:242px;background:#dedede"></div>
<div class="a" style="left:1677px;top:121px;width:244px;height:43.5px;border:2px solid #e8383e"></div>
<div class="a" style="left:0px;top:0px;width:1922px;height:955px;border:1px solid #a4a4a4;z-index:300"></div>
</body></html>
